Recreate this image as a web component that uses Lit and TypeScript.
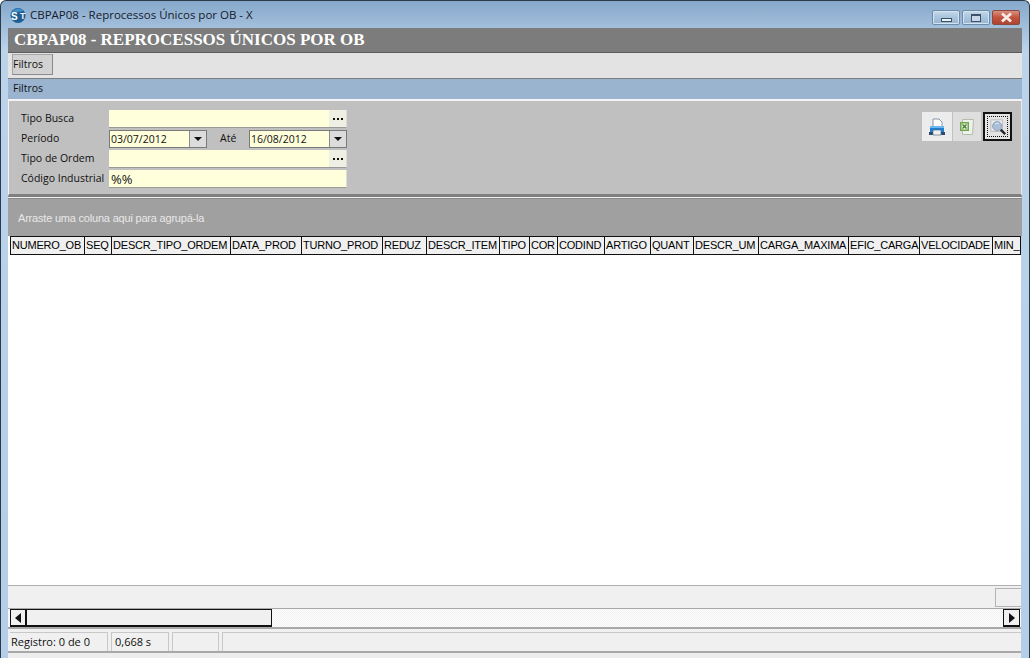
import { LitElement, html, css } from "lit";
import { customElement } from "lit/decorators.js";

const COLS: [string, number][] = [
  ["NUMERO_OB", 74], ["SEQ", 27], ["DESCR_TIPO_ORDEM", 119], ["DATA_PROD", 71], ["TURNO_PROD", 81],
  ["REDUZ", 44], ["DESCR_ITEM", 73], ["TIPO", 30], ["COR", 28], ["CODIND", 47], ["ARTIGO", 46],
  ["QUANT", 43], ["DESCR_UM", 65], ["CARGA_MAXIMA", 90], ["EFIC_CARGA", 71], ["VELOCIDADE", 73], ["MIN_", 28],
];

@customElement("app-root")
export class AppRoot extends LitElement {
  static styles = css`
    :host { display: block; width: 1036px; height: 660px; background: #fff; overflow: hidden;
      font-family: "Open Sans", "Noto Sans", sans-serif; font-size: 10.5px; color: #111; }
    .win { width: 1030px; height: 658px; box-sizing: border-box; border: 1px solid #2b3a48; border-bottom: 0;
      border-radius: 6px 6px 0 0; display: flex; flex-direction: column;
      background: linear-gradient(#86a8cb 0, #bcd3ea 50px, #b4cde8 100%); padding: 0 8px 0 7px; }
    .cap { height: 27px; flex: none; display: flex; align-items: center; }
    .cap-t { font-size: 11.5px; margin-left: 2px; color: #15202c; }
    .logo { width: 18px; height: 18px; margin: 1px 0 0 2px; flex: none; }
    .wbtns { margin-left: auto; display: flex; gap: 2px; margin-right: 1px; align-self: flex-start; margin-top: 9px; }
    .wb { width: 28px; height: 15px; box-sizing: border-box; border: 1px solid #6d8aa8; border-radius: 2px; display: flex;
      align-items: center; justify-content: center; background: linear-gradient(#c4d8ea, #a9c4de 50%, #98b4d0); box-shadow: inset 0 0 0 1px #d6e4f0; }
    .wb.x { background: linear-gradient(#d89080, #c4523e 50%, #ad4432); border-color: #8a4a40; box-shadow: none; }
    .wb i { display: block; box-sizing: border-box; background: #e9f0f6; border: 1px solid #3c5066; }
    .wb i.min { width: 11px; height: 4px; margin-top: 4px; }
    .wb i.max { width: 10px; height: 8px; border-width: 2px 1px 1px; background: #c8d8e8; }
    .client { flex: 1; display: flex; flex-direction: column; background: #f0f0f0; min-height: 0; }
    .head { height: 25px; flex: none; background: #7c7c7c; border-bottom: 1px solid #5c5c5c; box-sizing: border-box;
      display: flex; align-items: center; padding-left: 6px; color: #fff; margin-right: -1px;
      font: bold 17px "Liberation Serif", serif; }
    .tabs { height: 25px; flex: none; background: #e3e3e3; padding: 1px 0 0 4px; box-sizing: border-box; margin-right: -1px; }
    .tab { width: 41px; height: 21px; box-sizing: border-box; background: #d2d2d2; border: 1px solid #a4a4a4;
      border-right-color: #8a8a8a; border-bottom-color: #8a8a8a; line-height: 19px; }
    .pnl { height: 119px; flex: none; border: 1px solid #7d7d7d; border-width: 1px 0 1px 0; display: flex; flex-direction: column; box-sizing: border-box; margin-right: -1px; }
    .pnl-h { height: 20px; flex: none; background: #9ab4d0; line-height: 18px; padding-left: 5px; }
    .pnl-b { flex: 1; background: #c0c0c0; border: 1px solid; border-top-width: 2px; border-bottom-width: 2px; border-color: #f4f4f4 #e8e8e8 #808080 #f4f4f4;
      display: flex; justify-content: space-between; padding: 9px 9px 0 12px; box-sizing: border-box; }
    .form { display: grid; grid-template-columns: 88px 98px 42px 98px; grid-auto-rows: 18px; row-gap: 2px; align-items: center; }
    .lbl { white-space: nowrap; margin-top: -3px; }
    .wide { grid-column: 2 / 5; }
    .ed { height: 18px; background: #ffffdb; box-sizing: border-box; display: flex; align-items: center; padding-left: 2px;
      border-bottom: 1px solid #9a9a9a; border-right: 1px solid #dcdcdc; }
    .ed.date { border: 1px solid #7a7a7a; padding-left: 1px; }
    .ed.pct span { font-size: 13px; }
    .ed span { flex: 1; }
    .dots, .drop { width: 17px; height: 100%; display: flex; align-items: center; justify-content: center; flex: none; box-sizing: border-box; }
    .dots { gap: 2px; background: #efefe4; }
    .dots b { width: 2px; height: 2px; background: #111; }
    .drop { background: #dcdcdc; border-left: 1px solid #8a8a8a; }
    .drop b { width: 0; height: 0; border: 4px solid transparent; border-top: 4px solid #111; border-bottom: 0; }
    .ate { padding-left: 13px; margin-top: -3px; }
    .tools { display: flex; gap: 1px; align-items: flex-start; padding-top: 2px; }
    .tool { width: 30px; height: 29px; background: #ececec; display: flex; align-items: center; justify-content: center; box-sizing: border-box; }
    .tool.g { background: #dedede; width: 28px; }
    .tool.on { width: 29px; margin-left: 1px; border: 2px solid #111; outline: 1px dotted #111; outline-offset: -5px; background: #e4e4e4; }
    .group { height: 38px; flex: none; margin: 1px -1px 0 0; background: #a0a0a0; color: #e8e8e8; padding-left: 10px; line-height: 38px;
      font-family: "Liberation Sans", sans-serif; font-size: 11px; letter-spacing: -0.2px; border-top: 1px solid #888; box-sizing: border-box; }
    .grid { flex: 1; background: #fff; padding-left: 2px; display: flex; flex-direction: column; min-height: 0; }
    .hdr { display: flex; height: 19px; flex: none; width: 1011px; overflow: hidden; background: #f0f0f0; border-top: 1px solid #111; border-bottom: 1px solid #111;
      box-sizing: border-box; border-left: 1px solid #111; }
    .hc { flex: none; box-sizing: border-box; border-right: 1px solid #111; padding-left: 1px; line-height: 17px; white-space: nowrap; overflow: hidden;
      font-family: "Liberation Sans", sans-serif; font-size: 11px; letter-spacing: -0.2px; color: #000; }
    .body { flex: 1; }
    .foot { height: 24px; flex: none; background: #f0f0f0; border-top: 1px solid #b0b0b0; border-bottom: 1px solid #a8a8a8; box-sizing: border-box; display: flex; justify-content: flex-end; padding-top: 2px; }
    .foot i { width: 26px; height: 19px; box-sizing: border-box; border: 1px solid #b4b4b4; border-right: 0; }
    .sb { height: 18px; flex: none; display: flex; padding: 0 1px 0 2px; background: repeating-conic-gradient(#f0f0f0 0 25%, #ffffff 0 50%) 0 0 / 2px 2px; }
    .sb-t { box-sizing: border-box; border: 1px solid #111; background: #f0f0f0; border-bottom-width: 2px; height: 18px; display: flex; align-items: center; justify-content: center; }
    .sb-a { width: 17px; }
    .sb-a.l { border-right-width: 2px; }
    .sb-th { width: 245px; border-left: 0; }
    .sb-s { flex: 1; }
    .sb-a b { width: 0; height: 0; border: 5px solid transparent; }
    .sb-a.l b { border-right: 6px solid #111; border-left: 0; }
    .sb-a.r b { border-left: 6px solid #111; border-right: 0; }
    .st { height: 26px; flex: none; background: #f0f0f0; border-top: 2px solid #a8a8a8; border-bottom: 2px solid #a8a8a8; box-sizing: border-box; display: flex; padding: 3px 0 0 2px; gap: 3px; }
    .cell { border: 1px solid #c8c8c8; border-bottom: 0; height: 100%; line-height: 17px; box-sizing: border-box; font-size: 11px; }
    .s1 { width: 98px; border-left: 0; padding-left: 1px; }
    .s2 { width: 58px; padding-left: 3px; }
    .s3 { width: 47px; }
    .s4 { flex: 1; border-right: 0; }
    .tail { height: 5px; flex: none; background: #ededed; }
  `;

  private ed(text: string, suffix: "dots" | "drop" | "", cls = "") {
    return html`<div class="ed ${cls}"><span>${text}</span>
      ${suffix === "dots" ? html`<div class="dots"><b></b><b></b><b></b></div>` : ""}
      ${suffix === "drop" ? html`<div class="drop"><b></b></div>` : ""}</div>`;
  }

  render() {
    return html`<div class="win">
      <div class="cap">
        <svg class="logo" viewBox="0 0 18 18">
          <circle cx="8" cy="9.5" r="7.5" fill="#1d5f93"/>
          <path d="M2 7a7 7 0 0 1 12-2z" fill="#3f8fc6"/>
          <text x="1" y="13.5" font-size="10" font-weight="700" font-family="Liberation Sans" fill="#fff">S</text>
          <text x="10" y="13" font-size="9" font-weight="700" font-family="Liberation Sans" fill="#f0f4f8">T</text>
        </svg>
        <span class="cap-t">CBPAP08 - Reprocessos Únicos por OB - X</span>
        <div class="wbtns">
          <div class="wb"><i class="min"></i></div>
          <div class="wb"><i class="max"></i></div>
          <div class="wb x">
            <svg width="15" height="11" viewBox="0 0 15 11"><path d="M3 1.5 12 9.5M12 1.5 3 9.5" stroke="#f6ece8" stroke-width="2.8"/></svg>
          </div>
        </div>
      </div>
      <div class="client">
        <div class="head">CBPAP08 - REPROCESSOS ÚNICOS POR OB</div>
        <div class="tabs"><div class="tab">Filtros</div></div>
        <div class="pnl">
          <div class="pnl-h">Filtros</div>
          <div class="pnl-b">
            <div class="form">
              <span class="lbl">Tipo Busca</span><div class="wide">${this.ed("", "dots")}</div>
              <span class="lbl">Período</span>${this.ed("03/07/2012", "drop", "date")}<span class="ate">Até</span>${this.ed("16/08/2012", "drop", "date")}
              <span class="lbl">Tipo de Ordem</span><div class="wide">${this.ed("", "dots")}</div>
              <span class="lbl">Código Industrial</span><div class="wide">${this.ed("%%", "", "pct")}</div>
            </div>
            <div class="tools">
              <div class="tool">
                <svg width="20" height="20" viewBox="0 0 20 20">
                  <path d="M6 2h6l3 3v6H6z" fill="#fff" stroke="#8a96a6"/>
                  <path d="M3 9h14v6H3z" fill="#1f7fd0"/>
                  <path d="M3 9h14v2H3z" fill="#6db8ee"/>
                  <path d="M2 15h16v3H2z" fill="#2b4a72"/>
                  <path d="M6 13h8v5H6z" fill="#eef2f6" stroke="#5a6a80" stroke-width=".7"/>
                </svg>
              </div>
              <div class="tool g">
                <svg width="20" height="20" viewBox="0 0 20 20">
                  <path d="M5.5 2.5h11l-1 15h-10z" fill="#eef0ea" stroke="#b4bcae"/>
                  <path d="M3 5h9v9H3z" fill="#6fa64e"/>
                  <path d="M4.5 6.5h6v6h-6z" fill="#e8f2dc"/>
                  <path d="M5.5 7.5l4 4M9.5 7.5l-4 4" stroke="#3f7c2a" stroke-width="1.3"/>
                </svg>
              </div>
              <div class="tool on">
                <svg width="18" height="18" viewBox="0 0 20 20">
                  <path d="M2 2h13v13H2z" fill="#e6e8ec" stroke="#b4b8be"/>
                  <circle cx="9" cy="9" r="5" fill="#a9c0d8" stroke="#8a9cb0"/>
                  <path d="M7 6.5a3 3 0 0 1 4 0" stroke="#e8f0f8" fill="none"/>
                  <path d="M13 13l5 5" stroke="#222" stroke-width="2.6"/>
                </svg>
              </div>
            </div>
          </div>
        </div>
        <div class="group">Arraste uma coluna aqui para agrupá-la</div>
        <div class="grid">
          <div class="hdr">
            ${COLS.map(([n, w]) => html`<div class="hc" style="width:${w}px">${n}</div>`)}
          </div>
          <div class="body"></div>
        </div>
        <div class="foot"><i></i></div>
        <div class="sb">
          <div class="sb-t sb-a l"><b></b></div>
          <div class="sb-t sb-th"></div>
          <div class="sb-s"></div>
          <div class="sb-t sb-a r"><b></b></div>
        </div>
        <div class="st">
          <div class="cell s1">Registro: 0 de 0</div>
          <div class="cell s2">0,668 s</div>
          <div class="cell s3"></div>
          <div class="cell s4"></div>
        </div>
        <div class="tail"></div>
      </div>
    </div>`;
  }
}
